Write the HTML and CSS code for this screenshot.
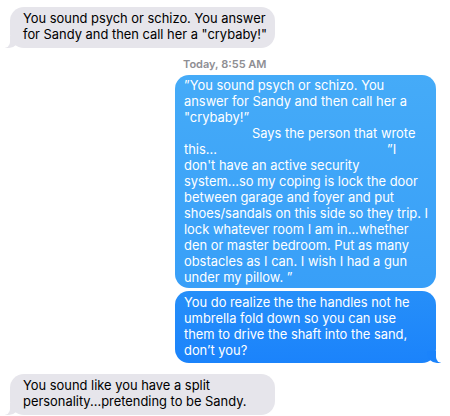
FILE: index.html
```html
<!DOCTYPE html>
<html lang="en">
<head>
  <meta charset="UTF-8">
  <meta name="viewport" content="width=device-width, initial-scale=1.0">
  <title>Messages</title>
  <link rel="stylesheet" href="styles.css">
</head>
<body>

<div class="thread">
  <div class="row them">
    <div class="bubble gray tail">You sound psych or schizo. You answer<br>for Sandy and then call her a "crybaby!"</div>
  </div>

  <div class="row me">
    <div class="stamp">Today, 8:55 AM</div>
  </div>

  <div class="row me">
    <div class="bubble blue first">”You sound psych or schizo. You<br>answer for Sandy and then call her a<br>"crybaby!”<br><span class="gap-says"></span>Says the person that wrote<br><span class="pad-quote">this...</span>”I<br>don't have an active security<br>system...so my coping is lock the door<br>between garage and foyer and put<br>shoes/sandals on this side so they trip. I<br>lock whatever room I am in...whether<br>den or master bedroom. Put as many<br>obstacles as I can. I wish I had a gun<br>under my pillow. ”</div>
  </div>

  <div class="row me">
    <div class="bubble blue tail">You do realize the the handles not he<br>umbrella fold down so you can use<br>them to drive the shaft into the sand,<br>don’t you?</div>
  </div>

  <div class="row them last">
    <div class="bubble gray tail">You sound like you have a split<br>personality...pretending to be Sandy.</div>
  </div>
</div>

</body>
</html>
```

FILE: styles.css
```css
/* page */
body {
  margin: 0;
  background: #fff;
  font-family: 'Inter', 'Helvetica Neue', sans-serif;
  font-size: 12.9px;
  line-height: 16px;
  color: #000;
}

.thread {
  display: flex;
  flex-direction: column;
  padding: 7px 14px 0 10px;
}

.row {
  display: flex;
}

.row.them {
  justify-content: flex-start;
}

.row.me {
  justify-content: flex-end;
}

.row.last {
  margin-top: 11px;
}

/* timestamp */
.stamp {
  width: 261px;
  box-sizing: border-box;
  padding-left: 8px;
  margin: 10px 0 4px;
  font-size: 11px;
  line-height: 13px;
  font-weight: 600;
  color: #8e8e93;
}

/* bubbles */
.bubble {
  position: relative;
  box-sizing: border-box;
  border-radius: 14px;
  white-space: nowrap;
}

.gray {
  width: 265px;
  padding: 4px 12px 5px 13px;
  background: #e6e5eb;
}

.blue {
  width: 261px;
  padding: 3px 8px 3px 9px;
  color: #fff;
}

.blue.first {
  margin-bottom: 3px;
  padding-bottom: 2px;
  background: linear-gradient(180deg, #45abf8, #389ff8);
}

.blue.tail {
  padding-bottom: 4px;
  padding-top: 4px;
  background: linear-gradient(180deg, #268ff9, #1b83fb);
}

/* tails */
.gray.tail::before {
  content: "";
  position: absolute;
  bottom: 0;
  left: -5px;
  width: 14px;
  height: 12px;
  background: #e6e5eb;
  border-bottom-right-radius: 10px;
}

.gray.tail::after {
  content: "";
  position: absolute;
  bottom: 0;
  left: -8px;
  width: 8px;
  height: 12px;
  background: #fff;
  border-bottom-right-radius: 6px;
}

.blue.tail::before {
  content: "";
  position: absolute;
  bottom: 0;
  right: -5px;
  width: 14px;
  height: 12px;
  background: #1b83fb;
  border-bottom-left-radius: 10px;
}

.blue.tail::after {
  content: "";
  position: absolute;
  bottom: 0;
  right: -8px;
  width: 8px;
  height: 12px;
  background: #fff;
  border-bottom-left-radius: 6px;
}

/* indents inside the long quote */
.gap-says {
  display: inline-block;
  width: 68px;
}

.pad-quote {
  display: inline-block;
  width: 203px;
}
```
